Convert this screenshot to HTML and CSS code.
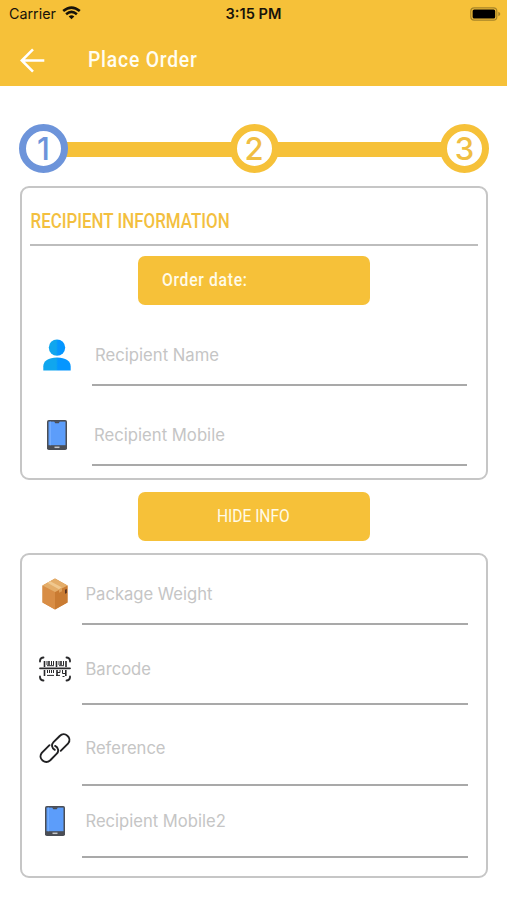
FILE: index.html
```html
<!DOCTYPE html>
<html lang="en">
<head>
<meta charset="utf-8">
<meta name="viewport" content="width=device-width">
<title>Place Order</title>
<link rel="stylesheet" href="styles.css">
</head>
<body>
<svg class="defs" aria-hidden="true">
  <defs>
    <linearGradient id="blue" gradientUnits="userSpaceOnUse" x1="0" y1="0" x2="28" y2="0"><stop offset=".47" stop-color="#10a6ee"/><stop offset=".53" stop-color="#0596ff"/></linearGradient>
    <symbol id="phone" viewBox="0 0 22 32">
      <rect x="1" y="1" width="20" height="30" rx="1.8" fill="#4b4e55"/>
      <path d="M2.5 2.6h17v23.6h-17z" fill="#5c9dfa"/>
      <path d="M3.8 2.6h1v23.6h-1z" fill="#79b0ff"/>
      <path d="M8 2.3h6l-1.3 2H9.3z" fill="#4b4e55"/>
      <path d="M8.5 28.3h5" stroke="#c5c7cb" stroke-width="1.5"/>
    </symbol>
  </defs>
</svg>
<header class="header">
  <div class="status">
    <div class="carrier">Carrier
      <svg width="19" height="14" viewBox="0 0 19 14" fill="none" stroke="#17130a" stroke-width="2.6"><path d="M1.2 5.1Q9.5-2 17.8 5.1"/><path d="M4.1 8.2q5.4-4.5 10.8 0"/><path d="M9.5 13.2 6.7 10.4q2.8-2.2 5.6 0z" fill="#17130a" stroke="none"/></svg>
    </div>
    <div class="time">3:15 PM</div>
    <svg class="battery" width="31" height="14" viewBox="0 0 31 14"><rect x=".8" y=".8" width="26" height="12.4" rx="3.4" fill="none" stroke="#a68428" stroke-width="1.2"/><rect x="2.6" y="2.5" width="22.6" height="9" rx="1.6" fill="#000"/><path d="M28.3 4.8q2 .8 2 2.2t-2 2.2z" fill="#a68428"/></svg>
  </div>
  <div class="nav">
    <svg width="26" height="26" viewBox="0 0 26 26" fill="none" stroke="#fff" stroke-width="2.6"><path d="M24.300 13.500H2M13 2.300 1.800 13.500 13 24.700"/></svg>
    <h1>Place Order</h1>
  </div>
</header>
<main>
  <div class="steps">
    <span class="step active">1</span><i></i><span class="step">2</span><i></i><span class="step">3</span>
  </div>
  <section class="card">
    <h2><span>RECIPIENT INFORMATION</span></h2>
    <div class="button date"><span>Order date:</span></div>
    <div class="row name">
      <svg width="28" height="32" viewBox="0 0 28 32" fill="url(#blue)"><circle cx="14" cy="8.6" r="8.2"/><path d="M.3 31.5v-4.2c0-5 5-8.7 13.7-8.7s13.7 3.7 13.7 8.7v4.2z"/></svg>
      <div class="field">Recipient Name</div>
    </div>
    <div class="row mobile">
      <svg width="22" height="32"><use href="#phone"/></svg>
      <div class="field">Recipient Mobile</div>
    </div>
  </section>
  <div class="button hide"><span>HIDE INFO</span></div>
  <section class="card details">
    <div class="row weight">
      <svg width="26" height="32" viewBox="0 0 26 32"><path d="M13 .5 25.5 7.5v17L13 31.5.5 24.5v-17z" fill="#d48a40"/><path d="M.5 7.5 13 14v17.5L.5 24.5z" fill="#d88d45"/><path d="M13 14 25.5 7.5v17L13 31.5z" fill="#c97b32"/><path d="M13 .5 25.5 7.5 13 14 .5 7.5z" fill="#e4ad69"/><path d="m5.300 4.800 3-1.600L20 9.600l-3 1.600z" fill="#f0c88f"/><path d="m17 11.200 3-1.600v3.600l-3 1.500z" fill="#dfa25c"/><path d="m23 11.800 1.800-.9v4l-1.800.9z" fill="#57301f"/></svg>
      <div class="field">Package Weight</div>
    </div>
    <div class="row barcode">
      <svg width="32" height="26" viewBox="0 0 32 26" fill="none" stroke="#29292b"><g stroke-width="1.8" stroke-linecap="round"><path d="M1 5.500V4.500Q1.500 1.500 4.500 1.500M27.500 1.500Q30.500 1.500 31 4.500v1M31 20.500v1Q30.500 24.500 27.500 24.500M4.500 24.500Q1.500 24.500 1 21.500v-1M1 12.300h30"/></g><path stroke-width="1.600" d="M5.500 5v6M10 5v4M17.500 5v6M22 5v4M27 5v6M5.500 14v6M18 14v6M26.800 14v6"/><path stroke-width="1" d="M8 5v4M12.500 5v4M14.500 5v4M20 5v4M24.500 5v4M8 9.700h7M20 9.700h5M8.500 14v3M10.500 14v3M12.500 14v3M14.500 14v3M8 19.400h7M17 19.400h4M21 14v2.500h-3M23.500 14v3.500h3.300M23.500 20.500h2"/></svg>
      <div class="field">Barcode</div>
    </div>
    <div class="row reference">
      <svg width="32" height="30" viewBox="0 0 32 30" fill="none" stroke="#202022" stroke-width="1.900" stroke-linecap="round"><path d="M15.800 16.800C12.500 15 12.200 11.500 14.500 9.200L20.700 3c4.800-4.800 12.800 1.500 8.500 7.300l-7.500 7.500"/><path d="M10.500 12.200 2.800 19.900c-4.300 5.800 3.500 11.900 8.500 7.300l6.500-6.500c2.300-2.300 1.700-6-1.700-7.800"/></svg>
      <div class="field">Reference</div>
    </div>
    <div class="row mobile2">
      <svg width="22" height="32"><use href="#phone"/></svg>
      <div class="field">Recipient Mobile2</div>
    </div>
  </section>
</main>
</body>
</html>
```
FILE: styles.css
```css
* { box-sizing: border-box; }
body { margin: 0; background: #fff; font-family: Inter, sans-serif; }
svg { display: block; flex: none; }
.defs { position: absolute; width: 0; height: 0; }

.header { height: 86px; background: #f6c139; }
.status {
  display: grid;
  grid-template-columns: 1fr auto 1fr;
  align-items: center;
  height: 28px;
  padding: 0 6px 0 9px;
  color: #17130a;
}
.carrier { display: flex; align-items: center; gap: 6px; font-size: 14.3px; line-height: 16px; margin-top: -1px; }
.carrier svg { margin-top: -1px; }
.time { font-weight: 600; font-size: 14.6px; line-height: 16px; margin: -1px 3px 0 0; }
.battery { justify-self: end; margin-top: -1px; }
.nav { display: flex; align-items: center; height: 64px; padding-left: 20px; }
h1, h2, .button { font-family: Roboto, sans-serif; }
h1 {
  margin: -2px 0 0 42px;
  color: #fffdf2;
  font-size: 22.5px;
  font-weight: 500;
  letter-spacing: .9px;
  transform: scaleX(.86);
  transform-origin: left;
}

main { padding: 38px 19px 0 20px; }
.steps { display: flex; align-items: center; height: 49px; margin: 0 -1px 13px; }
.steps i { flex: 1; height: 15px; margin: 2px -3px 0; background: #f6c139; }
.step {
  position: relative;
  display: grid;
  place-items: center;
  width: 49px;
  height: 49px;
  border: 7px solid #f6c139;
  border-radius: 50%;
  background: #fff;
  color: #f0be43;
  font-size: 31px;
  font-weight: 500;
  line-height: 1;
}
.active { border-color: #6d94da; color: #6d94da; }

.card { height: 294px; border: 2px solid #c6c6c6; border-radius: 9px; }
h2 {
  height: 58px;
  margin: 0 8px 10px;
  padding-top: 9px;
  border-bottom: 2px solid #bdbdbd;
  color: #f3bf3f;
  font-size: 20px;
  font-weight: 500;
  line-height: 48px;
  white-space: nowrap;
}
h2 span { display: inline-block; transform: translateX(.5px) scaleX(.845); transform-origin: left; }
.button {
  width: 232px;
  height: 49px;
  border-radius: 7px;
  background: #f6c139;
  color: #fffbe8;
  font-size: 18.5px;
  line-height: 48px;
}
.button span { display: inline-block; }
.date { margin-left: 116px; padding-left: 24px; font-weight: 500; }
.date span { letter-spacing: .8px; transform: scaleX(.85); transform-origin: left; }
.hide { margin: 12px 0 12px 118px; text-align: center; }
.hide span { transform: translateX(-1px) scaleX(.84); }

.row {
  display: grid;
  grid-template-columns: 70px 375px;
  height: 80px;
}
.row svg {
  align-self: center;
  justify-self: center;
  margin-top: calc(var(--drop) - 3px);
  margin-right: 1px;
}
.field {
  display: flex;
  align-items: center;
  padding: var(--drop) 0 0 3px;
  border-bottom: 2px solid #a9a9a9;
  color: #c5c5c5;
  font-size: 16.7px;
  white-space: nowrap;
}
.name { --drop: 21px; height: 81px; }
.mobile { --drop: 20px; }
.mobile .field { padding-left: 2px; }
.details { height: 325px; }
.details .row { grid-template-columns: 60px 386px; }
.details svg { margin-left: 7px; }
.details .field { padding-left: 3.5px; font-size: 16.6px; }
.details .weight { --drop: 10px; height: 70px; }
.details .barcode { --drop: 10px; }
.details .reference { --drop: 7px; height: 81px; }
.details .mobile2 { height: 72px; --drop: 0px; }
```
